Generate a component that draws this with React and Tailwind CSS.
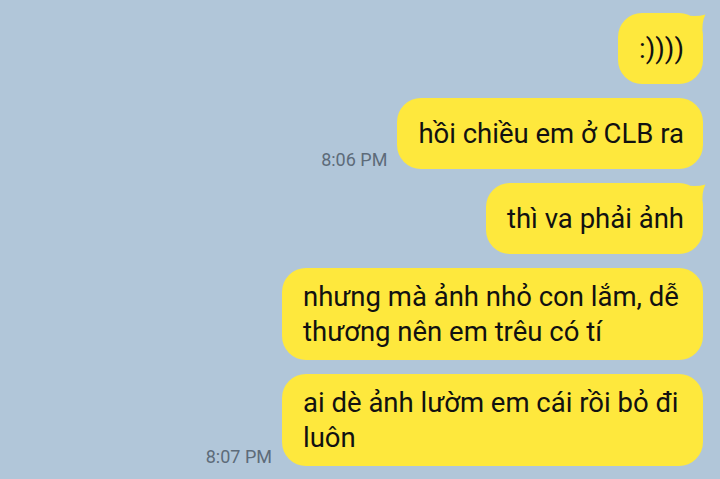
import React from 'react';

const font = { fontFamily: 'Roboto, "Noto Sans", sans-serif' };

function Tail() {
  return (
    <svg
      className="absolute -right-[3px] top-0"
      width="25"
      height="26"
      viewBox="0 0 25 26"
    >
      <path d="M1 1.5 Q14 4.5 24.5 1.5 Q20 9 22 26 L1 26 Z" fill="#fee83d" />
    </svg>
  );
}

function Bubble({ text, time, tail }) {
  return (
    <div className="flex items-end gap-[10px]">
      {time && (
        <span className="text-[18px] leading-none text-[#5d6b79]">{time}</span>
      )}
      <div className="relative max-w-[421px] min-h-[71px] flex items-center rounded-[24px] bg-[#fee83d] pl-[21px] pr-[19px] py-[11px]">
        {tail && <Tail />}
        <p className="relative text-[27.5px] leading-[35px] text-[#111111]">{text}</p>
      </div>
    </div>
  );
}

export default function App() {
  return (
    <div
      className="w-full h-[479px] overflow-hidden bg-[#b1c6d9] flex flex-col items-end gap-[14px] pt-[13px] pr-[17px]"
      style={font}
    >
      <Bubble text=":))))" tail />
      <Bubble text="hồi chiều em ở CLB ra" time="8:06 PM" />
      <Bubble text="thì va phải ảnh" tail />
      <Bubble text="nhưng mà ảnh nhỏ con lắm, dễ thương nên em trêu có tí" />
      <Bubble text="ai dè ảnh lườm em cái rồi bỏ đi luôn" time="8:07 PM" />
    </div>
  );
}
